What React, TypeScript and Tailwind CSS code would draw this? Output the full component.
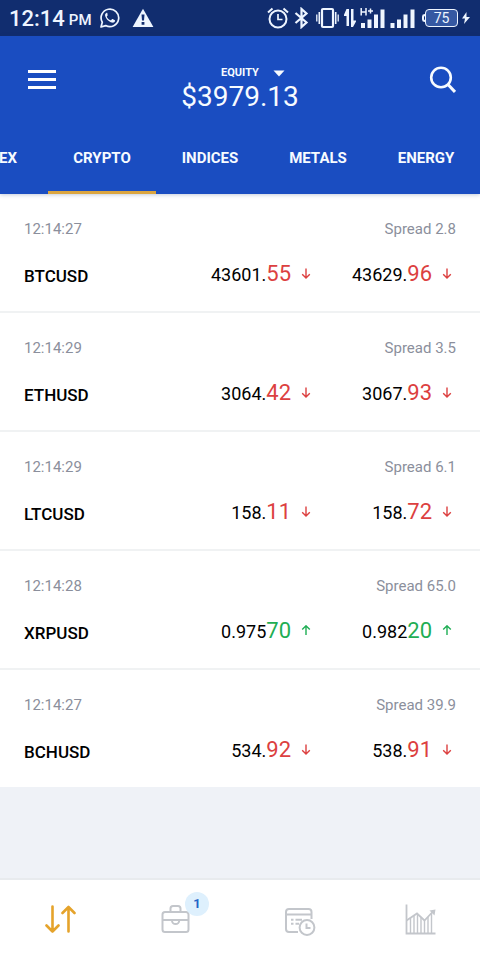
import { clsx } from "clsx"

type Quote = {
  symbol: string
  time: string
  spread: string
  bid: [string, string]
  ask: [string, string]
  up?: boolean
}

const quotes: Quote[] = [
  { symbol: "BTCUSD", time: "12:14:27", spread: "2.8", bid: ["43601.", "55"], ask: ["43629.", "96"] },
  { symbol: "ETHUSD", time: "12:14:29", spread: "3.5", bid: ["3064.", "42"], ask: ["3067.", "93"] },
  { symbol: "LTCUSD", time: "12:14:29", spread: "6.1", bid: ["158.", "11"], ask: ["158.", "72"] },
  { symbol: "XRPUSD", time: "12:14:28", spread: "65.0", bid: ["0.975", "70"], ask: ["0.982", "20"], up: true },
  { symbol: "BCHUSD", time: "12:14:27", spread: "39.9", bid: ["534.", "92"], ask: ["538.", "91"] },
]

const tabs = ["FOREX", "CRYPTO", "INDICES", "METALS", "ENERGY"]

function StatusBar() {
  return (
    <div className="flex h-9 items-center justify-between bg-[#112d6f] pl-[9px] pr-[10px] text-[#eef5ff]">
      <div className="flex items-center">
        <span className="pt-px text-[22px] leading-9 font-medium">12:14</span>
        <span className="ml-1 pt-1 text-[15px] font-medium">PM</span>
        <svg className="ml-2 h-5 w-5" viewBox="0 0 20 20" fill="none" stroke="currentColor">
          <path d="M1 19l1.3-4.7A8.8 8.8 0 1 1 5.7 17.6z" strokeWidth="1.7" strokeLinejoin="round" />
          <path
            d="M7.4 5.3c-.3-.5-.7-.5-1-.4-1 .5-1.5 1.5-1.3 2.7.6 3.2 3.6 6.3 6.9 7 1.5.3 2.7-.4 3-1.6.1-.4.1-.7-.1-.8l-2.3-1.2c-.3-.1-.5 0-.7.2l-.8 1c-.2.2-.4.2-.6.1-1.7-.7-2.900-1.900-3.700-3.400-.1-.2 0-.4.1-.5l.7-.9c.1-.2.1-.4 0-.6z"
            fill="currentColor"
            stroke="none"
          />
        </svg>
        <svg className="ml-3 h-5 w-[22px]" viewBox="0 0 22 20">
          <path d="M11 .8L21.4 19H.6z" fill="currentColor" />
          <path d="M9.5 6.500h3l-.5 6h-2zM9.600 14h2.800v2.800H9.600z" fill="#112d6f" />
        </svg>
      </div>
      <div className="flex items-center gap-1">
        <svg className="h-[22px] w-[22px]" viewBox="0 0 22 22" fill="none" stroke="currentColor" strokeWidth="2">
          <circle cx="11" cy="12" r="8.5" />
          <path d="M11 7v5.500h4.500" strokeWidth="1.7" />
          <path d="M1 5.500L5.500 1.500M21 5.500L16.500 1.500" />
        </svg>
        <svg className="h-[22px] w-[18px]" viewBox="0 0 18 22" fill="none" stroke="currentColor" strokeWidth="2.2">
          <path d="M2.500 6l11 9.500-5 4.500V2l5 4.500-11 9.500" />
        </svg>
        <svg className="h-[22px] w-[25px]" viewBox="0 0 25 22" fill="none" stroke="currentColor">
          <rect x="7" y="2" width="11" height="18" rx="1" strokeWidth="2.2" />
          <path d="M4.300 5v12M20.700 5v12" strokeWidth="1.6" />
          <path d="M1.800 7.500v7M23.200 7.500v7" strokeWidth="1.3" />
        </svg>
        <svg className="h-[22px] w-[12px]" viewBox="0 0 12 22" fill="currentColor">
          <path d="M2.500 2H5v17H2.500V9H-.5zM7 2h2.500v11.500h3L9 20H7z" />
        </svg>
        <svg className="h-[26px] w-[26px]" viewBox="0 0 26 26">
          <path d="M1 18h4v5H1zM7.500 14.500h4V23h-4zM14 9.500h4V23h-4zM20.500 4.500h4V23h-4z" fill="currentColor" />
          <path d="M1.200 3v7.500M6 3v7.500M1.200 7H6M8 6h5M10.500 3.500v5" stroke="currentColor" strokeWidth="1.5" />
        </svg>
        <svg className="h-[26px] w-[28px]" viewBox="0 0 28 26" fill="currentColor">
          <path d="M.5 18h4v5h-4zM7 14.500h4V23H7zM13.500 9.500h4V23h-4zM20.500 4.500h4V23h-4z" />
        </svg>
        <div className="flex items-center">
          <span className="h-2 w-[3px] rounded-l border-2 border-r-0 border-current" />
          <span className="h-[18px] w-[33px] rounded border border-current bg-[#3558a2] text-center text-sm leading-4">
            75
          </span>
        </div>
        <svg className="h-3 w-2" viewBox="0 0 8 12" fill="currentColor">
          <path d="M4.500 0L0 6.500h3L2 12l6-7H4.500z" />
        </svg>
      </div>
    </div>
  )
}

function Header() {
  return (
    <header className="relative bg-[#1a4dc1] text-[#f7fbff] shadow-[0_1px_4px_rgba(20,50,110,0.25)]">
      <div className="flex h-[86px] items-center justify-between px-6">
        <button aria-label="Menu" className="flex w-9 flex-col items-center gap-[5px]">
          <span className="h-[3px] w-7 bg-white" />
          <span className="h-[3px] w-7 bg-white" />
          <span className="h-[3px] w-7 bg-white" />
        </button>
        <button className="flex flex-col items-center pt-5">
          <span className="flex items-center gap-[14px] pl-[26px] text-[11px] leading-4 font-bold">
            EQUITY
            <svg className="h-[7px] w-3" viewBox="0 0 12 7" fill="currentColor">
              <path d="M.5.500h11L6 6.500z" />
            </svg>
          </span>
          <span className="text-[28px] leading-8">$3979.13</span>
        </button>
        <button aria-label="Search" className="flex w-9 justify-end">
          <svg className="h-7 w-7" viewBox="0 0 28 28" fill="none" stroke="currentColor" strokeWidth="2.6">
            <circle cx="13" cy="12.5" r="9.8" />
            <path d="M20 19.500l7 7.500" strokeWidth="3" />
          </svg>
        </button>
      </div>
      <nav className="flex justify-end overflow-hidden">
        {tabs.map((tab) => (
          <button
            key={tab}
            className={clsx(
              "h-[72px] w-[108px] shrink-0 border-b-3 pt-1 text-[15px] font-bold",
              tab === "CRYPTO" ? "border-[#dba53f]" : "border-transparent",
            )}
          >
            {tab}
          </button>
        ))}
      </nav>
    </header>
  )
}

function Price({ value, up }: { value: [string, string]; up?: boolean }) {
  const color = up ? "text-[#1fae54]" : "text-[#dc4040]"
  return (
    <div className="flex w-[141px] items-center justify-end gap-[10px] pr-1">
      <span className="text-lg leading-7">
        {value[0]}
        <span className={clsx("text-[22px]", color)}>{value[1]}</span>
      </span>
      <svg className={clsx("h-3 w-[10px]", color)} viewBox="0 0 10 12" fill="none" stroke="currentColor" strokeWidth="1.4">
        {up ? <path d="M5 10V.8M1.200 4.600L5 .8l3.800 3.800" /> : <path d="M5 .5V10M1.200 6.200L5 10l3.800-3.800" />}
      </svg>
    </div>
  )
}

function QuoteRow({ quote }: { quote: Quote }) {
  return (
    <li className="border-b-2 border-[#f0f2f3] bg-white px-6 pt-[25px] pb-[23px] last:border-b-0">
      <div className="flex justify-between text-[15px] leading-5 text-[#8b8f9c]">
        <span>{quote.time}</span>
        <span>Spread {quote.spread}</span>
      </div>
      <div className="mt-[21px] flex h-7 items-center text-black">
        <span className="flex-1 pt-1 text-[17px] leading-6 font-medium">{quote.symbol}</span>
        <Price value={quote.bid} up={quote.up} />
        <Price value={quote.ask} up={quote.up} />
      </div>
    </li>
  )
}

function BottomNav() {
  return (
    <nav className="grid h-[82px] grid-cols-4 border-t-2 border-[#e8ebee] bg-white text-[#c3c6cb]">
      <button aria-label="Quotes" className="flex items-center justify-center text-[#e5a32b]">
        <svg className="h-8 w-8" viewBox="0 0 32 32" fill="none" stroke="currentColor" strokeWidth="2.6" strokeLinecap="round" strokeLinejoin="round">
          <path d="M8.500 2.500v25M2.500 21.500l6 6 6-6M24.500 27.500V3M18.500 9l6-6 6 6" />
        </svg>
      </button>
      <button aria-label="Positions" className="flex items-center justify-center pr-2">
        <span className="relative">
          <svg className="h-8 w-8" viewBox="0 0 32 32" fill="none" stroke="currentColor" strokeWidth="2">
            <rect x="2.5" y="8" width="26" height="20" rx="2.5" />
            <path d="M10.500 8V4.500A2.500 2.500 0 0 1 13 2h5a2.500 2.500 0 0 1 2.500 2.500V8M2.500 16h26" />
            <path d="M12 16v.5a3.600 3.600 0 0 0 7.200 0V16" />
          </svg>
          <span className="absolute -top-3 left-[25px] h-6 w-6 rounded-full bg-[#def0fd] text-center text-[13px] leading-6 font-bold text-[#2365c7]">
            1
          </span>
        </span>
      </button>
      <button aria-label="Orders" className="flex items-center justify-center">
        <svg className="h-8 w-8" viewBox="0 0 32 32" fill="none" stroke="currentColor" strokeWidth="2">
          <path d="M14 28H5a3 3 0 0 1-3-3V8a3 3 0 0 1 3-3h19.500a3 3 0 0 1 3 3v7M2 10.500h25.500" />
          <path d="M7 15.800h2.500M11.500 15.800H18M7 19.800h2.500M11.500 19.800H15" />
          <circle cx="23" cy="23.5" r="7.4" />
          <path d="M22.500 19.500v4.500h4" />
        </svg>
      </button>
      <button aria-label="Analytics" className="flex items-center justify-center">
        <svg className="h-8 w-8" viewBox="0 0 32 32" fill="none" stroke="currentColor" strokeWidth="1.8">
          <path d="M2.500.500v29H31.500" />
          <path d="M2.500 16.500L13 9.500l7.500 7 8-8.500" />
          <path d="M25.500 6.500l6-1-1 6z" fill="currentColor" stroke="none" />
          <path d="M6.500 14v15M10 12v17M13.500 10v19M17 13.500V29M20.500 16.500V29M24 13v16M27.500 9.500V29" strokeWidth="1.4" />
        </svg>
      </button>
    </nav>
  )
}

export default function App() {
  return (
    <div className="flex min-h-screen flex-col bg-[#eff2f7] font-[Roboto,sans-serif]">
      <StatusBar />
      <Header />
      <main className="flex-1">
        <ul>
          {quotes.map((quote) => (
            <QuoteRow key={quote.symbol} quote={quote} />
          ))}
        </ul>
      </main>
      <BottomNav />
    </div>
  )
}
